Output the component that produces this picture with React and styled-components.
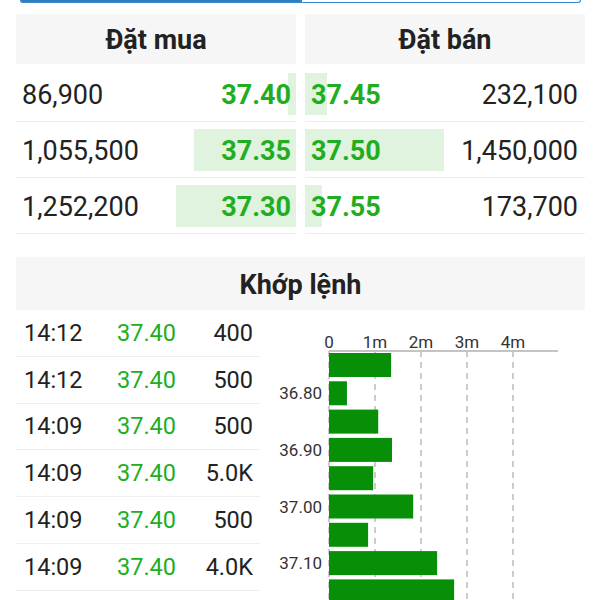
import styled, { createGlobalStyle } from "styled-components";

const GlobalStyle = createGlobalStyle`
  body {
    margin: 0;
    background: #fff;
    font-family: Roboto, "Noto Sans", sans-serif;
    color: #222;
  }
`;

const Page = styled.div`
  width: 600px;
  height: 600px;
  overflow: hidden;
`;

const Tabs = styled.div`
  display: flex;
  height: 3px;
  margin: 0 19px 11px 20px;
`;

const Tab = styled.div`
  flex: 1;
  background: ${(p) => (p.active ? "#2e7ec2" : "#fff")};
  border: 1px solid #3b87c7;
  border-top: none;
  border-radius: ${(p) => (p.active ? "0 0 0 5px" : "0 0 5px 0")};
`;

const Content = styled.div`
  padding: 0 15px 0 16px;
`;

const Book = styled.div`
  display: grid;
  grid-template-columns: 1fr 1fr;
  column-gap: 9px;
`;

const Side = styled.div`
  display: flex;
  flex-direction: column;
`;

const Header = styled.div`
  height: ${(p) => p.h || 50}px;
  padding-top: 2px;
  box-sizing: border-box;
  background: #f6f6f6;
  display: flex;
  align-items: center;
  justify-content: center;
  font-weight: 700;
  font-size: 27px;
  color: #222;
  margin-bottom: ${(p) => p.gap || 0}px;
`;

const BookRow = styled.div`
  height: 56px;
  box-sizing: border-box;
  border-bottom: 1px solid #eeeeee;
  display: flex;
  align-items: center;
  justify-content: space-between;
  flex-direction: ${(p) => (p.ask ? "row-reverse" : "row")};
  padding: ${(p) => (p.ask ? "2px 7px 0 6px" : "2px 5px 0 6px")};
  font-size: 27px;
  background-image: linear-gradient(#dff3df, #dff3df);
  background-repeat: no-repeat;
  background-size: ${(p) => p.depth}px 42px;
  background-position: ${(p) => (p.ask ? "left 7px" : "right 7px")};
`;

const Volume = styled.span`
  color: #222;
`;

const Price = styled.span`
  color: #1fae1f;
  font-weight: ${(p) => (p.bold ? 700 : 400)};
`;

const Section = styled.div`
  margin-top: 23px;
`;

const Trades = styled.div`
  display: grid;
  grid-template-columns: 244px 1fr;
  column-gap: 10px;
`;

const TradeList = styled.div`
  display: flex;
  flex-direction: column;
`;

const TradeRow = styled.div`
  height: 46.8px;
  flex-shrink: 0;
  box-sizing: border-box;
  border-bottom: 1px solid #eeeeee;
  display: grid;
  grid-template-columns: 93px auto 1fr;
  align-items: center;
  padding: 0 7px 0 8px;
  font-size: 23.5px;
`;

const Qty = styled.span`
  text-align: right;
`;

const Chart = styled.svg`
  display: block;
  font-family: Roboto, "Noto Sans", sans-serif;
`;

const bids = [
  { vol: "86,900", price: "37.40", depth: 8 },
  { vol: "1,055,500", price: "37.35", depth: 102 },
  { vol: "1,252,200", price: "37.30", depth: 120 },
];

const asks = [
  { vol: "232,100", price: "37.45", depth: 22 },
  { vol: "1,450,000", price: "37.50", depth: 139 },
  { vol: "173,700", price: "37.55", depth: 17 },
];

const trades = [
  ["14:12", "37.40", "400"],
  ["14:12", "37.40", "500"],
  ["14:09", "37.40", "500"],
  ["14:09", "37.40", "5.0K"],
  ["14:09", "37.40", "500"],
  ["14:09", "37.40", "4.0K"],
];

const volumes = [1.35, 0.39, 1.07, 1.37, 0.96, 1.83, 0.85, 2.35, 2.72];
const priceLabels = { 1: "36.80", 3: "36.90", 5: "37.00", 7: "37.10" };

function VolumeChart() {
  const x0 = 59;
  const unit = 46;
  const axisY = 41;
  return (
    <Chart width="316" height="290" viewBox="0 0 316 290">
      {[0, 1, 2, 3, 4].map((k) => (
        <text key={k} x={x0 + unit * k} y={38} fontSize="17" fill="#333" textAnchor="middle">
          {k === 0 ? "0" : `${k}m`}
        </text>
      ))}
      {[0, 1, 2, 3, 4].map((k) => (
        <line
          key={k}
          x1={x0 + unit * k}
          x2={x0 + unit * k}
          y1={axisY}
          y2={290}
          stroke="#999"
          strokeWidth="1"
          strokeDasharray="6 5"
        />
      ))}
      <line x1={x0} x2={288} y1={axisY} y2={axisY} stroke="#c4c4c4" strokeWidth="2" />
      {volumes.map((v, i) => {
        const top = 43 + i * 28.3;
        return (
          <g key={i}>
            <rect x={x0} y={top} width={v * unit} height={24} fill="#078f07" />
            {priceLabels[i] && (
              <text x={52} y={top + 18} fontSize="17" fill="#333" textAnchor="end">
                {priceLabels[i]}
              </text>
            )}
          </g>
        );
      })}
    </Chart>
  );
}

export default function App() {
  return (
    <Page>
      <GlobalStyle />
      <Tabs>
        <Tab active />
        <Tab />
      </Tabs>
      <Content>
        <Book>
          <Side>
            <Header gap={2}>Đặt mua</Header>
            {bids.map((b) => (
              <BookRow key={b.price} depth={b.depth}>
                <Volume>{b.vol}</Volume>
                <Price bold>{b.price}</Price>
              </BookRow>
            ))}
          </Side>
          <Side>
            <Header gap={2}>Đặt bán</Header>
            {asks.map((a) => (
              <BookRow key={a.price} ask depth={a.depth}>
                <Volume>{a.vol}</Volume>
                <Price bold>{a.price}</Price>
              </BookRow>
            ))}
          </Side>
        </Book>
        <Section>
          <Header h={53}>Khớp lệnh</Header>
          <Trades>
            <TradeList>
              {trades.map(([t, p, q], i) => (
                <TradeRow key={i}>
                  <span>{t}</span>
                  <Price>{p}</Price>
                  <Qty>{q}</Qty>
                </TradeRow>
              ))}
            </TradeList>
            <VolumeChart />
          </Trades>
        </Section>
      </Content>
    </Page>
  );
}
